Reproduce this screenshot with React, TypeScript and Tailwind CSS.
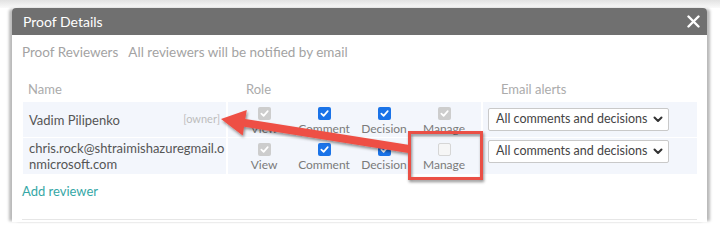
import { type FC } from "react";

type Check = "blue" | "gray" | "empty";

const Checkbox: FC<{ kind: Check }> = ({ kind }) => {
  if (kind === "empty") {
    return <span className="block w-[13px] h-[13px] rounded-[2px] border border-[#d6d6d6] bg-[#f6f6f6]" />;
  }
  return (
    <span
      className={
        "flex items-center justify-center w-[13px] h-[13px] rounded-[2px] " +
        (kind === "blue" ? "bg-[#1a73e8]" : "bg-[#cdcdcd]")
      }
    >
      <svg width="9" height="9" viewBox="0 0 10 10" fill="none">
        <path d="M1.5 5.2 L4 7.6 L8.6 2.4" stroke="white" strokeWidth="1.9" strokeLinecap="round" strokeLinejoin="round" />
      </svg>
    </span>
  );
};

const RoleItem: FC<{ kind: Check; label: string }> = ({ kind, label }) => (
  <div className="w-[60px] flex flex-col items-center">
    <Checkbox kind={kind} />
    <span className="mt-[2px] h-[14px] leading-[14px] text-[12px] text-[#7a7a7a]">{label}</span>
  </div>
);

const AlertSelect: FC = () => (
  <div className="w-[181px] h-[23px] border border-[#c9c9c9] bg-white rounded-[2px] flex items-center justify-between pl-[7px] pr-[5px]">
    <span className="whitespace-nowrap text-[12.5px] text-[#444]">All comments and decisions</span>
    <svg width="10" height="7" viewBox="0 0 10 7" fill="none">
      <path d="M1.5 1.5 L5 5 L8.5 1.5" stroke="#333" strokeWidth="2" strokeLinecap="round" strokeLinejoin="round" />
    </svg>
  </div>
);

type Reviewer = {
  name: React.ReactNode;
  owner?: boolean;
  roles: Check[];
  height: string;
  selectPad: string;
};

const roleLabels = ["View", "Comment", "Decision", "Manage"];

const reviewers: Reviewer[] = [
  {
    name: "Vadim Pilipenko",
    owner: true,
    roles: ["gray", "blue", "blue", "gray"],
    height: "h-[35px]",
    selectPad: "pt-[6px]",
  },
  {
    name: (
      <>
        chris.rock@shtraimishazuregmail.o
        <br />
        nmicrosoft.com
      </>
    ),
    roles: ["gray", "blue", "blue", "empty"],
    height: "h-[36px]",
    selectPad: "pt-[2px]",
  },
];

const ReviewerRow: FC<Reviewer> = ({ name, owner, roles, height, selectPad }) => (
  <div className={"flex gap-[2px] " + height}>
    <div className="w-[203px] bg-[#f3f6fc] flex items-center justify-between pl-[6px] pr-[6px]">
      <span className="text-[13px] leading-[16px] text-[#555]">{name}</span>
      {owner && <span className="text-[11px] text-[#bdbdbd]">[owner]</span>}
    </div>
    <div className="w-[253px] bg-[#f3f6fc] flex pl-[6px] pt-[5px]">
      {roles.map((kind, i) => (
        <RoleItem key={roleLabels[i]} kind={kind} label={roleLabels[i]} />
      ))}
    </div>
    <div className={"w-[214px] bg-[#f3f6fc] flex items-start pl-[5px] " + selectPad}>
      <AlertSelect />
    </div>
  </div>
);

const Annotation: FC = () => (
  <svg className="absolute inset-0 pointer-events-none" width="720" height="240" viewBox="0 0 720 240">
    <defs>
      <filter id="sh" x="-20%" y="-20%" width="140%" height="140%">
        <feDropShadow dx="1" dy="2" stdDeviation="1.5" floodColor="#000" floodOpacity="0.45" />
      </filter>
    </defs>
    <g filter="url(#sh)">
      <polygon
        points="409.6,145 245.3,118.9 246.8,110 221,119 242.7,135.6 244.1,126.8 408.4,153"
        fill="#ee4f44"
      />
      <rect x="409.5" y="132.5" width="72" height="46" fill="none" stroke="#ea4f45" strokeWidth="3" />
    </g>
  </svg>
);

export default function App() {
  return (
    <div className="relative w-[720px] h-[240px] overflow-hidden bg-white font-['Lato','Noto_Sans',sans-serif]">
      <div className="h-2 bg-gradient-to-b from-[#e2e2e2] to-[#fafafa]" />
      <div className="ml-3 w-[695px] h-[214px] bg-white rounded-t-[4px] flex flex-col shadow-[-4px_0_3px_-1px_rgba(0,0,0,0.28),4px_0_3px_-1px_rgba(0,0,0,0.28)]">
        <div className="h-[27px] bg-[#707070] rounded-t-[4px] flex items-center justify-between pl-[11px] pr-[7px]">
          <span className="text-[14px] text-white">Proof Details</span>
          <svg width="13" height="13" viewBox="0 0 13 13" fill="none">
            <path d="M1.5 1.5 L11.5 11.5 M11.5 1.5 L1.5 11.5" stroke="white" strokeWidth="2.4" strokeLinecap="round" />
          </svg>
        </div>
        <div className="flex-1 flex flex-col px-[10px]">
          <div className="mt-[9px] h-[17px] leading-[17px] text-[13.5px] text-[#a3a3a3] flex gap-[10px]">
            <span>Proof Reviewers</span>
            <span>All reviewers will be notified by email</span>
          </div>
          <div className="mt-[20px] ml-px flex h-[16px] leading-[16px] text-[13px] text-[#ababab]">
            <span className="w-[205px] pl-[5px]">Name</span>
            <span className="w-[255px] pl-[18px]">Role</span>
            <span className="pl-[18px]">Email alerts</span>
          </div>
          <div className="mt-[5px] ml-px w-[674px] flex flex-col gap-px">
            {reviewers.map((r, i) => (
              <ReviewerRow key={i} {...r} />
            ))}
          </div>
          <div className="mt-[9px] h-[16px] leading-[16px] text-[13px] text-[#35a7a6]">Add reviewer</div>
          <div className="mt-[20px] border-t border-[#e6e6e6]" />
        </div>
      </div>
      <Annotation />
    </div>
  );
}
